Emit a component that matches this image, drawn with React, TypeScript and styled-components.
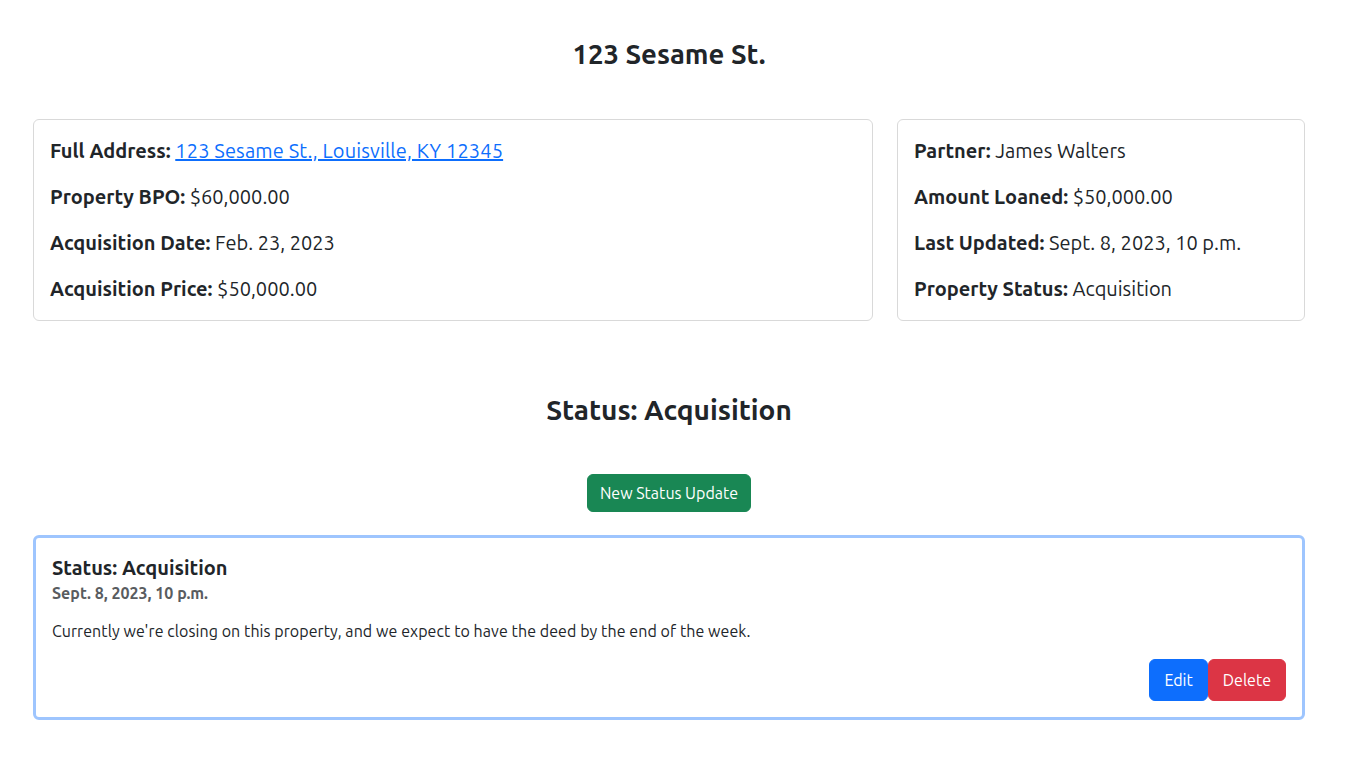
import React from 'react';
import styled, { createGlobalStyle } from 'styled-components';

const GlobalStyle = createGlobalStyle`
    * {
        box-sizing: border-box;
    }
    body {
        margin: 0;
        background: #fff;
        color: #212529;
        font-family: Ubuntu, Lato, "Liberation Sans", sans-serif;
        font-size: 16px;
        line-height: 1.5;
    }
`;

const Page = styled.div`
    width: 1272px;
    margin-left: 33px;
    padding-bottom: 40px;
`;

const Heading = styled.h2<{ size: number }>`
    margin: 0;
    text-align: center;
    font-size: ${({ size }) => size}px;
    font-weight: 700;
    line-height: 1.2;
`;

const TopHeading = styled(Heading)`
    padding-top: 37px;
    margin-bottom: 48.5px;
`;

const StatusHeading = styled(Heading)`
    margin-top: 72px;
    margin-bottom: 48px;
`;

const InfoRow = styled.div`
    display: grid;
    grid-template-columns: 840px 408px;
    gap: 24px;
`;

const InfoCard = styled.div`
    border: 1px solid #d9d9d9;
    border-radius: 6px;
    padding: 16px;
    display: flex;
    flex-direction: column;
    gap: 16px;
`;

const Line = styled.p`
    margin: 0;
    font-size: 20px;
    line-height: 30px;
    strong {
        font-weight: 700;
    }
    a {
        color: #0d6efd;
        text-decoration: underline;
        letter-spacing: 0.15px;
    }
`;

const Actions = styled.div<{ align: 'center' | 'flex-end' }>`
    display: flex;
    justify-content: ${({ align }) => align};
`;

const Button = styled.button<{ tone: string; tall?: boolean }>`
    font-family: inherit;
    font-size: 16px;
    line-height: 24px;
    color: #fff;
    background: ${({ tone }) => tone};
    border: 1px solid ${({ tone }) => tone};
    border-radius: 6px;
    padding: ${({ tall }) => (tall ? '8px 14px' : '6px 12px')};
    cursor: pointer;
`;

const StatusCard = styled.div`
    margin-top: 23px;
    border: 3px solid #9ec5fe;
    border-radius: 6px;
    padding: 18px 16px 16px;
`;

const CardTitle = styled.h5`
    margin: 0 0 8px;
    font-size: 20px;
    font-weight: 700;
    line-height: 1.2;
`;

const CardSubtitle = styled.h6`
    margin: -4px 0 16px;
    font-size: 16px;
    font-weight: 700;
    line-height: 1.2;
    color: #595c5f;
`;

const CardText = styled.p`
    margin: 0 0 16px;
    font-size: 16px;
    letter-spacing: 0.07px;
`;

const App: React.FC = () => {
    return (
        <>
            <GlobalStyle />
            <Page>
                <TopHeading size={27.5}>123 Sesame St.</TopHeading>
                <InfoRow>
                    <InfoCard>
                        <Line>
                            <strong>Full Address:</strong> <a href="#">123 Sesame St., Louisville, KY 12345</a>
                        </Line>
                        <Line>
                            <strong>Property BPO:</strong> $60,000.00
                        </Line>
                        <Line>
                            <strong>Acquisition Date:</strong> Feb. 23, 2023
                        </Line>
                        <Line>
                            <strong>Acquisition Price:</strong> $50,000.00
                        </Line>
                    </InfoCard>
                    <InfoCard>
                        <Line>
                            <strong>Partner:</strong> James Walters
                        </Line>
                        <Line>
                            <strong>Amount Loaned:</strong> $50,000.00
                        </Line>
                        <Line>
                            <strong>Last Updated:</strong> Sept. 8, 2023, 10 p.m.
                        </Line>
                        <Line>
                            <strong>Property Status:</strong> Acquisition
                        </Line>
                    </InfoCard>
                </InfoRow>

                <StatusHeading size={28}>Status: Acquisition</StatusHeading>
                <Actions align="center">
                    <Button tone="#198754">New Status Update</Button>
                </Actions>

                <StatusCard>
                    <CardTitle>Status: Acquisition</CardTitle>
                    <CardSubtitle>Sept. 8, 2023, 10 p.m.</CardSubtitle>
                    <CardText>
                        Currently we're closing on this property, and we expect to have the deed by the end of the week.
                    </CardText>
                    <Actions align="flex-end">
                        <Button tone="#0d6efd" tall>Edit</Button>
                        <Button tone="#dc3545" tall>Delete</Button>
                    </Actions>
                </StatusCard>
            </Page>
        </>
    );
};

export default App;
